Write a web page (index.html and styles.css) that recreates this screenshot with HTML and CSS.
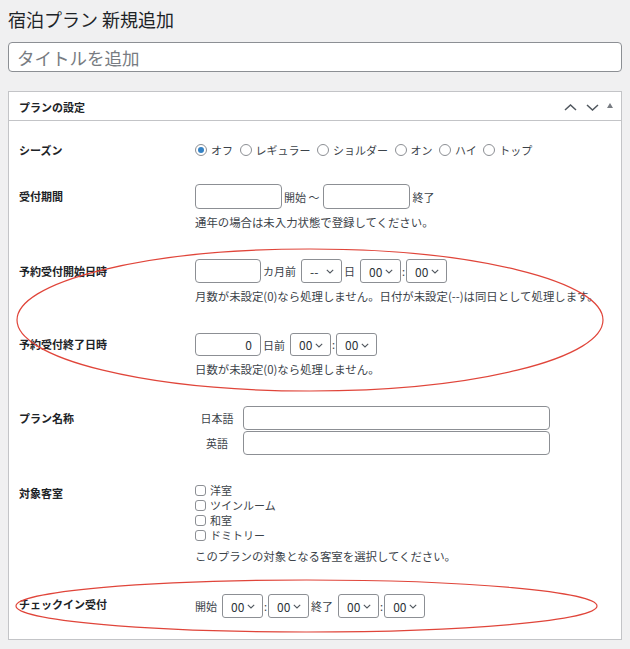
FILE: index.html
```html
<!DOCTYPE html>
<html lang="ja">
<head>
    <meta charset="UTF-8">
    <meta name="viewport" content="width=device-width, initial-scale=1.0">
    <title>宿泊プラン 新規追加</title>
    <link rel="stylesheet" href="styles.css">
</head>
<body>
    <div class="wrap">
        <h1>宿泊プラン 新規追加</h1>
        <input type="text" class="title-input" placeholder="タイトルを追加">

        <div class="postbox">
            <div class="postbox-header">
                <h2>プランの設定</h2>
                <div class="handle-actions">
                    <svg width="13" height="7" viewBox="0 0 13 7"><polyline points="1,6 6.5,1 12,6" fill="none" stroke="#50575e" stroke-width="1.5"/></svg>
                    <svg width="13" height="7" viewBox="0 0 13 7"><polyline points="1,1 6.5,6 12,1" fill="none" stroke="#50575e" stroke-width="1.5"/></svg>
                    <svg width="6" height="5" viewBox="0 0 6 5"><polygon points="0,5 3,0 6,5" fill="#787c82"/></svg>
                </div>
            </div>

            <div class="inside">
                <table class="form-table">
                    <!-- シーズン -->
                    <tr class="row-season">
                        <th>シーズン</th>
                        <td>
                            <div class="field-line">
                                <label class="radio"><input type="radio" name="season" checked>オフ</label>
                                <label class="radio"><input type="radio" name="season">レギュラー</label>
                                <label class="radio"><input type="radio" name="season">ショルダー</label>
                                <label class="radio"><input type="radio" name="season">オン</label>
                                <label class="radio"><input type="radio" name="season">ハイ</label>
                                <label class="radio"><input type="radio" name="season">トップ</label>
                            </div>
                        </td>
                    </tr>

                    <!-- 受付期間 -->
                    <tr class="row-period">
                        <th>受付期間</th>
                        <td>
                            <div class="field-line">
                                <input type="text" class="date-input">
                                <span class="txt">開始 〜</span>
                                <input type="text" class="date-input second">
                                <span class="txt">終了</span>
                            </div>
                            <p class="description">通年の場合は未入力状態で登録してください。</p>
                        </td>
                    </tr>

                    <!-- 予約受付開始日時 -->
                    <tr class="row-open">
                        <th>予約受付開始日時</th>
                        <td>
                            <div class="field-line">
                                <input type="text" class="num-input">
                                <span class="txt">カ月前</span>
                                <span class="select-wrap">
                                    <select><option>--</option></select>
                                    <svg class="chev" width="8" height="5" viewBox="0 0 8 5"><polyline points="0.8,0.8 4,4 7.2,0.8" fill="none" stroke="#50575e" stroke-width="1.1"/></svg>
                                </span>
                                <span class="txt">日</span>
                                <span class="select-wrap">
                                    <select><option>00</option></select>
                                    <svg class="chev" width="8" height="5" viewBox="0 0 8 5"><polyline points="0.8,0.8 4,4 7.2,0.8" fill="none" stroke="#50575e" stroke-width="1.1"/></svg>
                                </span>
                                <span class="sep">:</span>
                                <span class="select-wrap">
                                    <select><option>00</option></select>
                                    <svg class="chev" width="8" height="5" viewBox="0 0 8 5"><polyline points="0.8,0.8 4,4 7.2,0.8" fill="none" stroke="#50575e" stroke-width="1.1"/></svg>
                                </span>
                            </div>
                            <p class="description">月数が未設定(0)なら処理しません。日付が未設定(--)は同日として処理します。</p>
                        </td>
                    </tr>

                    <!-- 予約受付終了日時 -->
                    <tr class="row-close">
                        <th>予約受付終了日時</th>
                        <td>
                            <div class="field-line">
                                <input type="text" class="num-input" value="0">
                                <span class="txt">日前</span>
                                <span class="select-wrap">
                                    <select><option>00</option></select>
                                    <svg class="chev" width="8" height="5" viewBox="0 0 8 5"><polyline points="0.8,0.8 4,4 7.2,0.8" fill="none" stroke="#50575e" stroke-width="1.1"/></svg>
                                </span>
                                <span class="sep">:</span>
                                <span class="select-wrap">
                                    <select><option>00</option></select>
                                    <svg class="chev" width="8" height="5" viewBox="0 0 8 5"><polyline points="0.8,0.8 4,4 7.2,0.8" fill="none" stroke="#50575e" stroke-width="1.1"/></svg>
                                </span>
                            </div>
                            <p class="description">日数が未設定(0)なら処理しません。</p>
                        </td>
                    </tr>

                    <!-- プラン名称 -->
                    <tr class="row-name">
                        <th>プラン名称</th>
                        <td>
                            <div class="name-grid">
                                <span class="lang">日本語</span>
                                <input type="text" class="name-input">
                                <span class="lang">英語</span>
                                <input type="text" class="name-input">
                            </div>
                        </td>
                    </tr>

                    <!-- 対象客室 -->
                    <tr class="row-rooms">
                        <th>対象客室</th>
                        <td>
                            <label class="check"><input type="checkbox">洋室</label>
                            <label class="check"><input type="checkbox">ツインルーム</label>
                            <label class="check"><input type="checkbox">和室</label>
                            <label class="check"><input type="checkbox">ドミトリー</label>
                            <p class="description">このプランの対象となる客室を選択してください。</p>
                        </td>
                    </tr>

                    <!-- チェックイン受付 -->
                    <tr class="row-checkin">
                        <th>チェックイン受付</th>
                        <td>
                            <div class="field-line">
                                <span class="txt first">開始</span>
                                <span class="select-wrap">
                                    <select><option>00</option></select>
                                    <svg class="chev" width="8" height="5" viewBox="0 0 8 5"><polyline points="0.8,0.8 4,4 7.2,0.8" fill="none" stroke="#50575e" stroke-width="1.1"/></svg>
                                </span>
                                <span class="sep">:</span>
                                <span class="select-wrap">
                                    <select><option>00</option></select>
                                    <svg class="chev" width="8" height="5" viewBox="0 0 8 5"><polyline points="0.8,0.8 4,4 7.2,0.8" fill="none" stroke="#50575e" stroke-width="1.1"/></svg>
                                </span>
                                <span class="txt">終了</span>
                                <span class="select-wrap">
                                    <select><option>00</option></select>
                                    <svg class="chev" width="8" height="5" viewBox="0 0 8 5"><polyline points="0.8,0.8 4,4 7.2,0.8" fill="none" stroke="#50575e" stroke-width="1.1"/></svg>
                                </span>
                                <span class="sep">:</span>
                                <span class="select-wrap">
                                    <select><option>00</option></select>
                                    <svg class="chev" width="8" height="5" viewBox="0 0 8 5"><polyline points="0.8,0.8 4,4 7.2,0.8" fill="none" stroke="#50575e" stroke-width="1.1"/></svg>
                                </span>
                            </div>
                        </td>
                    </tr>
                </table>
            </div>
        </div>
    </div>

    <!-- 赤丸の注釈 -->
    <svg class="marks" width="630" height="649" viewBox="0 0 630 649">
        <ellipse cx="310" cy="320" rx="293" ry="71" fill="none" stroke="#e0453a" stroke-width="1.2"/>
        <ellipse cx="306.5" cy="606" rx="290.5" ry="26" fill="none" stroke="#e0453a" stroke-width="1.2"/>
    </svg>
</body>
</html>
```
FILE: styles.css
```css
/* General */
* {
    box-sizing: border-box;
}

html {
    overflow: hidden;
}

body {
    margin: 0;
    position: relative;
    background: #f0f0f1;
    font-family: "Noto Sans CJK JP", "Noto Sans", sans-serif;
    font-size: 11px;
    color: #3c434a;
}

.wrap {
    padding: 8px 8px 0;
}

h1 {
    margin: 0;
    font-size: 18px;
    font-weight: 400;
    line-height: 23px;
    color: #1d2327;
}

/* Inputs */
input[type="text"] {
    border: 1px solid #8c8f94;
    border-radius: 4px;
    background: #fff;
    font-family: inherit;
    font-size: 12px;
    color: #2c3338;
    outline: none;
}

.wrap .title-input {
    display: block;
    width: 100%;
    height: 30px;
    margin-top: 11px;
    padding: 0 8px;
    border-radius: 4px;
    font-size: 17.5px;
}

.title-input::placeholder {
    color: #787c82;
}

/* Postbox */
.postbox {
    margin-top: 19px;
    background: #fff;
    border: 1px solid #c3c4c7;
}

.postbox-header {
    display: flex;
    align-items: center;
    justify-content: space-between;
    height: 29px;
    padding: 0 8px 0 10px;
    border-bottom: 1px solid #c3c4c7;
}

.postbox-header h2 {
    margin: 0;
    font-size: 11px;
    font-weight: 700;
    color: #1d2327;
    padding-top: 1px;
}

.handle-actions {
    display: flex;
    align-items: center;
    gap: 9px;
    padding-top: 2px;
}

.handle-actions svg:last-child {
    margin-left: -1px;
    margin-top: -3px;
}

.inside {
    padding: 7px 10px;
}

/* Form table */
.form-table {
    width: 100%;
    border-collapse: collapse;
}

.form-table th {
    width: 176px;
    padding: 0;
    text-align: left;
    vertical-align: top;
    font-weight: 700;
    line-height: 18px;
    color: #1d2327;
}

.form-table td {
    padding: 14px 0;
    vertical-align: top;
    line-height: 18px;
}

.row-season th { padding-top: 13px; }
.row-season td { padding-bottom: 12px; }
.row-period th { padding-top: 17px; }
.row-open th { padding-top: 17px; }
.row-close th { padding-top: 16px; }
.row-name th { padding-top: 17px; }
.row-name td { padding-bottom: 13px; }
.row-rooms th { padding-top: 16px; }
.row-rooms td { padding-top: 15px; padding-bottom: 15px; }
.row-checkin th { padding-top: 15px; }

.field-line {
    display: flex;
    align-items: center;
}

.txt {
    padding: 0 2px;
    white-space: nowrap;
}

.txt.first {
    padding-left: 0;
}

.sep {
    margin: 0 1px;
    line-height: 1;
}

.description {
    margin: 4px 0 0;
    font-size: 11.4px;
    line-height: 18px;
    color: #3c434a;
}

.date-input {
    width: 87px;
    height: 25px;
}

.date-input.second {
    margin-left: 2px;
}

.num-input {
    width: 66px;
    height: 24px;
    padding: 0 8px;
    text-align: right;
}

.row-close .num-input {
    height: 23px;
}

.name-input {
    width: 307px;
    height: 24px;
}

.name-grid {
    display: grid;
    grid-template-columns: 44px 307px;
    column-gap: 4px;
    row-gap: 1px;
    align-items: center;
}

.lang {
    text-align: center;
}

/* Select */
.select-wrap {
    position: relative;
    margin-left: 3px;
}

.sep + .select-wrap {
    margin-left: 0;
}

.select-wrap select {
    display: block;
    width: 41px;
    height: 24px;
    padding: 0 0 0 8px;
    border: 1px solid #8c8f94;
    border-radius: 3px;
    background: #fff;
    font-family: inherit;
    font-size: 12px;
    color: #2c3338;
    appearance: none;
    -webkit-appearance: none;
    outline: none;
}

.row-close .select-wrap select {
    height: 23px;
}

.chev {
    position: absolute;
    right: 8px;
    top: 50%;
    margin-top: -2px;
    pointer-events: none;
}

/* Radio */
.radio {
    display: inline-flex;
    align-items: center;
    margin-right: 6.5px;
    line-height: 16px;
    color: #3c434a;
}

.radio input,
.check input {
    appearance: none;
    -webkit-appearance: none;
    margin: 0 4px 0 0;
    border: 1px solid #8c8f94;
    background: #fff;
}

.radio input {
    width: 12px;
    height: 12px;
    border-radius: 50%;
    position: relative;
}

.radio input:checked::after {
    content: "";
    position: absolute;
    left: 2px;
    top: 2px;
    width: 6px;
    height: 6px;
    border-radius: 50%;
    background: #3582c4;
}

/* Checkbox */
.check {
    display: flex;
    align-items: center;
    line-height: 15px;
}

.check input {
    width: 11px;
    height: 11px;
    border-radius: 3px;
}

/* Annotation marks */
.marks {
    position: absolute;
    left: 0;
    top: 0;
    pointer-events: none;
}
```
